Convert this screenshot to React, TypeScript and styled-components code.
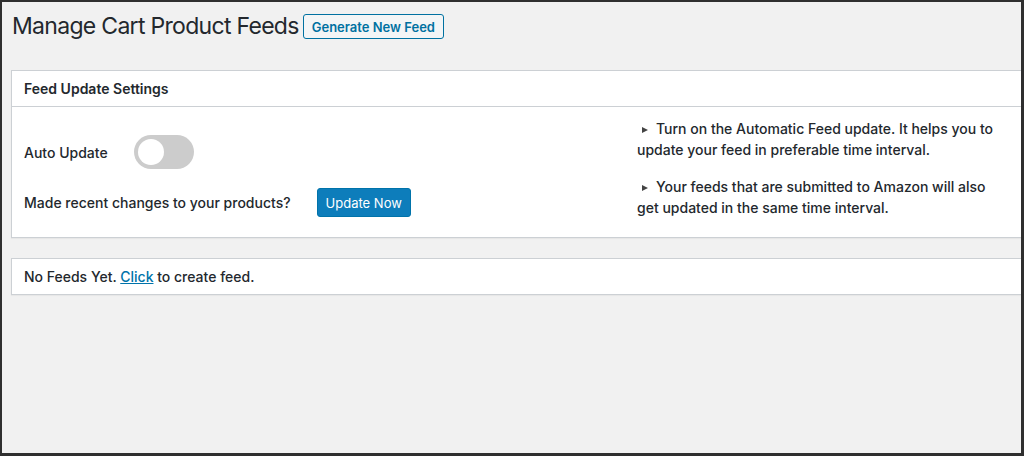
import styled, { createGlobalStyle } from "styled-components";

const GlobalStyle = createGlobalStyle`
  * {
    box-sizing: border-box;
  }

  body {
    margin: 0;
    font-family: Inter, "Noto Sans", "Liberation Sans", sans-serif;
    color: #23282d;
    background: #f1f1f1;
  }
`;

const Frame = styled.div`
  width: 1024px;
  height: 456px;
  overflow: hidden;
  background: #f1f1f1;
  border-style: solid;
  border-color: #2f2f2f;
  border-width: 2px 3px 3px 2px;
  padding-left: 9px;
`;

const TitleRow = styled.div`
  display: flex;
  align-items: center;
  height: 31px;
  margin-top: 9px;
  margin-bottom: 28px;
`;

const Title = styled.h1`
  margin: 0;
  padding-left: 1px;
  font-size: 23px;
  font-weight: 400;
  letter-spacing: -0.7px;
  line-height: 31px;
  color: #23282d;
`;

const OutlineButton = styled.button`
  margin-left: 4px;
  height: 25px;
  padding: 0 8px;
  border: 1px solid #0071a1;
  border-radius: 3px;
  background: #f3f5f6;
  color: #0071a1;
  font-family: inherit;
  font-size: 13px;
  font-weight: 600;
  cursor: pointer;
`;

const Panel = styled.section`
  background: #fff;
  border: 1px solid #ccd0d4;
  border-right: none;
  box-shadow: 0 1px 1px rgba(0, 0, 0, 0.04);
  margin-bottom: 20px;
`;

const PanelHeader = styled.h2`
  margin: 0;
  padding: 8px 12px;
  font-size: 14px;
  font-weight: 600;
  line-height: 19px;
  border-bottom: 1px solid #ccd0d4;
`;

const PanelBody = styled.div`
  display: grid;
  grid-template-columns: 613px 368px;
  padding: 0 12px 19px;
`;

const Controls = styled.div`
  display: flex;
  flex-direction: column;
  gap: 19px;
  padding-top: 28px;
`;

const ControlRow = styled.div`
  display: flex;
  align-items: center;
  gap: 26px;
  font-size: 14px;
  font-weight: 500;
`;

const Switch = styled.button<{ $on: boolean }>`
  position: relative;
  width: 60px;
  height: 34px;
  padding: 0;
  border: none;
  border-radius: 17px;
  background: ${(p) => (p.$on ? "#0085ba" : "#cccccc")};
  cursor: pointer;

  &::after {
    content: "";
    position: absolute;
    top: 4px;
    left: ${(p) => (p.$on ? "30px" : "4px")};
    width: 26px;
    height: 26px;
    border-radius: 50%;
    background: #fff;
  }
`;

const PrimaryButton = styled.button`
  height: 29px;
  padding: 0 8px;
  border: 1px solid #0073aa;
  border-radius: 3px;
  background: #0d7dbb;
  color: #fff;
  font-family: inherit;
  font-size: 13px;
  font-weight: 400;
  cursor: pointer;
`;

const Notes = styled.div`
  padding-top: 11px;
  font-size: 14px;
  font-weight: 500;
  line-height: 21px;
`;

const Note = styled.p`
  margin: 0 0 16px;

  &:last-child {
    margin-bottom: 0;
  }
`;

const Arrow = styled.span`
  display: inline-block;
  margin: 0 8px 1px 5px;
  border-left: 6px solid #444;
  border-top: 3.5px solid transparent;
  border-bottom: 3.5px solid transparent;
`;

const EmptyPanel = styled(Panel)`
  padding: 8px 12px;
  font-size: 14px;
  font-weight: 500;
  line-height: 19px;
`;

const Link = styled.a`
  color: #0073aa;
  text-decoration: underline;
`;

const notes = [
  "Turn on the Automatic Feed update. It helps you to update your feed in preferable time interval.",
  "Your feeds that are submitted to Amazon will also get updated in the same time interval.",
];

export default function App() {
  return (
    <>
      <GlobalStyle />
      <Frame>
        <TitleRow>
          <Title>Manage Cart Product Feeds</Title>
          <OutlineButton>Generate New Feed</OutlineButton>
        </TitleRow>

        <Panel>
          <PanelHeader>Feed Update Settings</PanelHeader>
          <PanelBody>
            <Controls>
              <ControlRow>
                <span>Auto Update</span>
                <Switch $on={false} role="switch" aria-checked={false} />
              </ControlRow>
              <ControlRow>
                <span>Made recent changes to your products?</span>
                <PrimaryButton>Update Now</PrimaryButton>
              </ControlRow>
            </Controls>
            <Notes>
              {notes.map((note) => (
                <Note key={note}>
                  <Arrow />
                  {note}
                </Note>
              ))}
            </Notes>
          </PanelBody>
        </Panel>

        <EmptyPanel>
          No Feeds Yet. <Link href="#">Click</Link> to create feed.
        </EmptyPanel>
      </Frame>
    </>
  );
}
